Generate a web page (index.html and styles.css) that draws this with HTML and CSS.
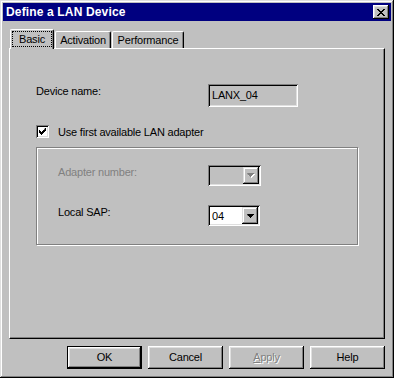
FILE: index.html
```html
<!DOCTYPE html>
<html>
<head>
<meta charset="utf-8">
<link rel="stylesheet" href="styles.css">
</head>
<body>
<div class="window">
  <div class="titlebar">
    <span class="title">Define a LAN Device</span>
    <button class="close" aria-label="Close">
      <svg width="8" height="7" viewBox="0 0 8 7"><path d="M0 0h2v1h1v1h2v-1h1v-1h2v1h-1v1h-1v1h-1v1h1v1h1v1h1v1h-2v-1h-1v-1h-2v1h-1v1h-2v-1h1v-1h1v-1h1v-1h-1v-1h-1v-1h-1z" fill="#000"/></svg>
    </button>
  </div>
  <div class="body">
    <div class="tabs">
      <div class="tab active"><span class="focus">Basic</span></div>
      <div class="tab t-act">Activation</div>
      <div class="tab t-perf">Performance</div>
    </div>
    <div class="panel">
      <div class="row name-row">
        <span class="label wide">Device name:</span>
        <div class="edit">LANX_04</div>
      </div>
      <div class="row check-row">
        <span class="checkbox">
          <svg width="7" height="7" viewBox="0 0 7 7"><path d="M6 0h1v3h-1v1h-1v1h-1v1h-1v1h-1v-1h-1v-1h-1v-3h1v1h1v1h1v-1h1v-1h1z" fill="#000"/></svg>
        </span>
        <span class="check-label">Use first available LAN adapter</span>
      </div>
      <div class="group">
        <div class="row combo-row">
          <span class="label narrow disabled">Adapter number:</span>
          <div class="combo off">
            <span class="combo-text"></span>
            <span class="combo-btn">
              <svg width="8" height="5" viewBox="0 0 8 5"><path d="M1 1h7v1h-1v1h-1v1h-1v1h-1v-1h-1v-1h-1z" fill="#fff"/><path d="M0 0h7v1h-1v1h-1v1h-1v1h-1v-1h-1v-1h-1z" fill="#808080"/></svg>
            </span>
          </div>
        </div>
        <div class="row combo-row second">
          <span class="label narrow">Local SAP:</span>
          <div class="combo">
            <span class="combo-text">04</span>
            <span class="combo-btn">
              <svg width="7" height="4" viewBox="0 0 7 4"><path d="M0 0h7v1h-1v1h-1v1h-1v1h-1v-1h-1v-1h-1z" fill="#000"/></svg>
            </span>
          </div>
        </div>
      </div>
    </div>
    <div class="buttons">
      <button class="btn default"><span>OK</span></button>
      <button class="btn"><span>Cancel</span></button>
      <button class="btn disabled"><span><u>A</u>pply</span></button>
      <button class="btn"><span>Help</span></button>
    </div>
  </div>
</div>
</body>
</html>
```

FILE: styles.css
```css
html, body {
  margin: 0;
  padding: 0;
  background: #c0c0c0;
}
body {
  font-family: "Liberation Sans", Arial, sans-serif;
  font-size: 11px;
  letter-spacing: -0.2px;
  color: #000;
}
.window {
  width: 394px;
  height: 378px;
  box-sizing: border-box;
  padding: 3px;
  background: #c0c0c0;
  box-shadow: inset -1px -1px #000, inset 1px 1px #dfdfdf, inset -2px -2px #808080, inset 2px 2px #fff;
}
.titlebar {
  height: 18px;
  background: #000080;
  display: flex;
  align-items: center;
  justify-content: space-between;
  padding: 0 2px 0 3px;
}
.title {
  color: #fff;
  font-weight: bold;
  font-size: 12px;
  letter-spacing: 0.15px;
}
.close {
  width: 16px;
  height: 14px;
  padding: 0;
  margin: 0;
  border: 0;
  background: #c0c0c0;
  box-shadow: inset -1px -1px #000, inset 1px 1px #fff, inset -2px -2px #808080, inset 2px 2px #dfdfdf;
  display: flex;
  align-items: center;
  justify-content: center;
}
.close svg { display: block; margin: 0 0 0 -1px; }
.body {
  padding: 8px 6px 0 6px;
}
.tabs {
  display: flex;
  align-items: flex-end;
  height: 19px;
  padding-left: 1px;
  position: relative;
  z-index: 2;
}
.tab {
  box-sizing: border-box;
  height: 17px;
  border-top: 1px solid #fff;
  border-left: 1px solid #fff;
  border-right: 1px solid #000;
  border-radius: 2px 2px 0 0;
  box-shadow: inset -1px 0 #808080;
  display: flex;
  align-items: center;
  justify-content: center;
  background: #c0c0c0;
}
.tab.active {
  width: 44px;
  height: 20px;
  margin-bottom: -1px;
  padding: 1px 0 0 0;
  align-items: flex-start;
  justify-content: flex-start;
}
.t-act { width: 56px; margin-left: 1px; }
.t-perf { width: 72px; margin-left: 1px; }
.focus {
  box-sizing: border-box;
  width: 40px;
  height: 16px;
  margin-left: 1px;
  border: 1px dotted #000;
  display: flex;
  align-items: center;
  justify-content: center;
}
.panel {
  height: 291px;
  box-sizing: border-box;
  border-top: 1px solid #fff;
  border-left: 1px solid #fff;
  border-right: 1px solid #000;
  border-bottom: 1px solid #000;
  box-shadow: inset -1px -1px #808080;
  padding: 35px 0 0 26px;
}
.row {
  display: flex;
  align-items: flex-start;
}
.label { line-height: 12px; padding-top: 1px; }
.name-row { height: 23px; }
.label.wide { width: 172px; }
.label.narrow { width: 150px; }
.disabled { color: #808080; }
.edit {
  width: 90px;
  height: 23px;
  box-sizing: border-box;
  box-shadow: inset 1px 1px #808080, inset -1px -1px #fff, inset 2px 2px #000, inset -2px -2px #dfdfdf;
  padding: 0 0 2px 4px;
  display: flex;
  align-items: center;
}
.check-row {
  margin-top: 18px;
  height: 13px;
  align-items: center;
}
.checkbox {
  width: 13px;
  height: 13px;
  box-sizing: border-box;
  background: #fff;
  box-shadow: inset 1px 1px #808080, inset -1px -1px #fff, inset 2px 2px #000, inset -2px -2px #dfdfdf;
  display: flex;
  align-items: center;
  justify-content: center;
}
.checkbox svg { display: block; }
.check-label { margin-left: 9px; }
.group {
  margin-top: 9px;
  width: 322px;
  height: 98px;
  box-sizing: border-box;
  border: 1px solid #808080;
  box-shadow: inset 1px 1px #fff, 1px 1px #fff;
  padding: 17px 0 0 21px;
}
.combo-row { height: 21px; }
.combo-row.second { margin-top: 19px; }
.combo {
  width: 52px;
  height: 21px;
  box-sizing: border-box;
  background: #fff;
  box-shadow: inset 1px 1px #808080, inset -1px -1px #fff, inset 2px 2px #000, inset -2px -2px #dfdfdf;
  display: flex;
  align-items: center;
  padding: 2px;
}
.combo.off { width: 53px; background: #c0c0c0; }
.combo-text {
  flex: 1;
  padding-left: 2px;
}
.combo-btn {
  width: 16px;
  height: 17px;
  box-sizing: border-box;
  background: #c0c0c0;
  box-shadow: inset -1px -1px #000, inset 1px 1px #dfdfdf, inset -2px -2px #808080, inset 2px 2px #fff;
  display: flex;
  align-items: center;
  justify-content: center;
}
.combo-btn svg { display: block; }
.buttons {
  display: flex;
  justify-content: flex-end;
  gap: 6px;
  margin-top: 7px;
}
.btn {
  width: 75px;
  height: 23px;
  margin: 0;
  padding: 0 0 2px 0;
  border: 0;
  background: #c0c0c0;
  font-family: "Liberation Sans", Arial, sans-serif;
  font-size: 11px;
  letter-spacing: -0.2px;
  color: #000;
  box-shadow: inset -1px -1px #000, inset 1px 1px #fff, inset -2px -2px #808080, inset 2px 2px #dfdfdf;
}
.btn.default {
  box-shadow: inset -1px -1px #000, inset 1px 1px #000, inset -2px -2px #000, inset 2px 2px #fff, inset -3px -3px #808080, inset 3px 3px #dfdfdf;
}
.btn.disabled {
  color: #808080;
  text-shadow: 1px 1px #fff;
}
```
